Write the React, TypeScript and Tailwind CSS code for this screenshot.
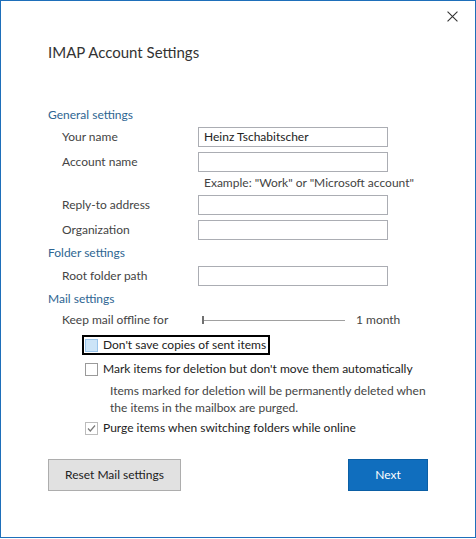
import React from 'react';

const font = "font-['Lato','Liberation_Sans',sans-serif]";

const Field = ({ label, value, className = '' }: { label: string; value?: string; className?: string }) => (
  <div className={`flex items-center h-[20px] pl-[14px] ${className}`}>
    <span className="w-[136px] text-[#444]">{label}</span>
    <div className="w-[190px] h-[20px] border border-[#abadb3] bg-white flex items-center px-[5px] text-[#222]">
      {value}
    </div>
  </div>
);

const Heading = ({ children, className = '' }: { children: React.ReactNode; className?: string }) => (
  <div className={`h-[16px] leading-[16px] text-[#2e6592] ${className}`}>{children}</div>
);

const Box = ({ state }: { state: 'focus' | 'empty' | 'checked' }) => {
  if (state === 'focus') {
    return <span className="block w-[13px] h-[13px] border border-[#99c4ea] bg-[#cce4f7]" />;
  }
  if (state === 'checked') {
    return (
      <span className="block w-[13px] h-[13px] border border-[#bcbcbc] bg-white relative">
        <svg viewBox="0 0 11 11" className="absolute left-0 top-0 w-[11px] h-[11px]">
          <path d="M2 5.5 L4.3 8 L9 2.5" fill="none" stroke="#7a7a7a" strokeWidth="1.2" />
        </svg>
      </span>
    );
  }
  return <span className="block w-[13px] h-[13px] border border-[#9a9a9a] bg-white" />;
};

export default function App() {
  return (
    <div className={`w-[476px] h-[539px] bg-white ${font} text-[12px] text-[#333]`}>
      <div className="relative w-[476px] h-[538px] border border-[#1e6fba] px-[47px] flex flex-col">
        <svg viewBox="0 0 10 10" className="absolute left-[446px] top-[10px] w-[11px] h-[11px]">
          <path d="M0.5 0.5 L9.5 9.5 M9.5 0.5 L0.5 9.5" stroke="#333" strokeWidth="1" fill="none" />
        </svg>

        <div className="mt-[40px] h-[22px] leading-[22px] text-[15px] text-[#333]">IMAP Account Settings</div>

        <Heading className="mt-[44px]">General settings</Heading>
        <Field className="mt-[4px]" label="Your name" value="Heinz Tschabitscher" />
        <Field className="mt-[5px]" label="Account name" />
        <div className="mt-[3px] h-[16px] leading-[16px] pl-[156px] text-[#444]">
          Example: "Work" or "Microsoft account"
        </div>
        <Field className="mt-[4px]" label="Reply-to address" />
        <Field className="mt-[5px]" label="Organization" />

        <Heading className="mt-[5px]">Folder settings</Heading>
        <Field className="mt-[5px]" label="Root folder path" />

        <Heading className="mt-[5px]">Mail settings</Heading>
        <div className="mt-[5px] h-[16px] flex items-center pl-[14px] text-[#444]">
          <span className="w-[140px]">Keep mail offline for</span>
          <div className="relative w-[143px] h-[8px] flex items-center">
            <div className="w-full h-px bg-[#a0a0a0]" />
            <div className="absolute left-0 top-0 w-[2px] h-[8px] bg-[#707070]" />
          </div>
          <span className="ml-[11px]">1 month</span>
        </div>

        <div className="mt-[7px] ml-[34px] self-start h-[20px] border-2 border-black flex items-center pl-[1px] pr-[2px] gap-[5px] text-[#222]">
          <Box state="focus" />
          <span>Don't save copies of sent items</span>
        </div>
        <div className="mt-[6px] ml-[34px] h-[16px] flex items-center pl-[3px] gap-[5px] text-[#222]">
          <Box state="empty" />
          <span>Mark items for deletion but don't move them automatically</span>
        </div>
        <div className="mt-[5px] pl-[62px] leading-[17px] text-[#444] w-[380px]">
          Items marked for deletion will be permanently deleted when the items in the mailbox are purged.
        </div>
        <div className="mt-[4px] ml-[34px] h-[16px] flex items-center pl-[3px] gap-[5px] text-[#222]">
          <Box state="checked" />
          <span>Purge items when switching folders while online</span>
        </div>

        <div className="mt-[23px] flex justify-between">
          <button className="w-[133px] h-[32px] bg-[#e1e1e1] border border-[#adadad] text-[#222]">
            Reset Mail settings
          </button>
          <button className="w-[80px] h-[32px] bg-[#106ebe] border border-[#0b5fa5] text-white">
            Next
          </button>
        </div>
      </div>
    </div>
  );
}
